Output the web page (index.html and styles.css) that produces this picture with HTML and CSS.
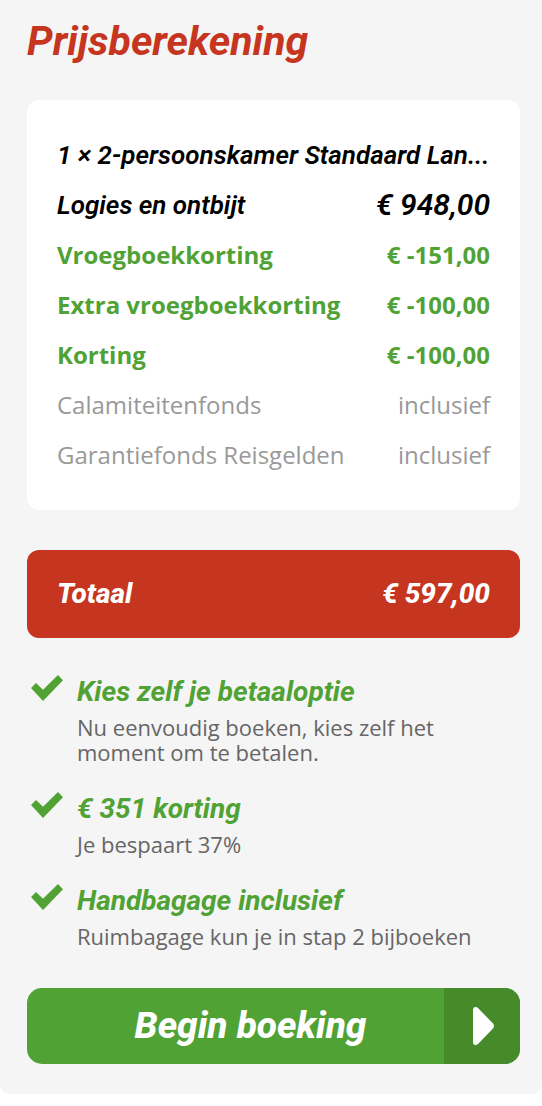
FILE: index.html
```
<!DOCTYPE html>
<html lang="nl">

<head>
    <meta charset="UTF-8">
    <meta name="viewport" content="width=device-width, initial-scale=1.0">
    <title>Prijsberekening</title>
    <link rel="stylesheet" href="styles.css">
</head>

<body>
    <main class="price-panel">
        <h1>Prijsberekening</h1>

        <div class="price-card">
            <table class="price-table">
                <tr class="room">
                    <th colspan="2" scope="row">1 × 2-persoonskamer Standaard Lan...</th>
                </tr>
                <tr class="room">
                    <th scope="row">Logies en ontbijt</th>
                    <td>€ 948,00</td>
                </tr>
                <tr class="discount">
                    <th scope="row">Vroegboekkorting</th>
                    <td>€ -151,00</td>
                </tr>
                <tr class="discount">
                    <th scope="row">Extra vroegboekkorting</th>
                    <td>€ -100,00</td>
                </tr>
                <tr class="discount">
                    <th scope="row">Korting</th>
                    <td>€ -100,00</td>
                </tr>
                <tr>
                    <th scope="row">Calamiteitenfonds</th>
                    <td>inclusief</td>
                </tr>
                <tr>
                    <th scope="row">Garantiefonds Reisgelden</th>
                    <td>inclusief</td>
                </tr>
            </table>
        </div>

        <div class="total">
            <span>Totaal</span>
            <span>€ 597,00</span>
        </div>

        <ul class="benefits">
            <li>
                <svg class="check" viewBox="0 0 32 26" aria-hidden="true"><path d="M0 13 5 8 12 14.800 27 0 32 5.200 12 26Z"/></svg>
                <div>
                    <h2>Kies zelf je betaaloptie</h2>
                    <p>Nu eenvoudig boeken, kies zelf het moment om te betalen.</p>
                </div>
            </li>
            <li>
                <svg class="check" viewBox="0 0 32 26" aria-hidden="true"><path d="M0 13 5 8 12 14.800 27 0 32 5.200 12 26Z"/></svg>
                <div>
                    <h2>€ 351 korting</h2>
                    <p>Je bespaart 37%</p>
                </div>
            </li>
            <li>
                <svg class="check" viewBox="0 0 32 26" aria-hidden="true"><path d="M0 13 5 8 12 14.800 27 0 32 5.200 12 26Z"/></svg>
                <div>
                    <h2>Handbagage inclusief</h2>
                    <p>Ruimbagage kun je in stap 2 bijboeken</p>
                </div>
            </li>
        </ul>

        <button type="button" class="book-button">
            <span class="book-label">Begin boeking</span>
            <span class="book-arrow">
                <svg viewBox="0 0 22 38" aria-hidden="true"><path d="M1 3Q1 0 3.500 0Q5 0 6 1L21 16.500Q23 19 21 21.500L6 37Q5 38 3.500 38Q1 38 1 35Z"/></svg>
            </span>
        </button>
    </main>
</body>

</html>
```

FILE: styles.css
```
* {
    margin: 0;
    padding: 0;
    box-sizing: border-box;
}

body {
    background: #fff;
    font-family: 'Open Sans', sans-serif;
}

.price-panel {
    background: #f5f5f5;
    padding: 16px 22px 30px 27px;
    border-radius: 0 0 10px 10px;
}

h1,
h2,
.room,
.total,
.book-button {
    font-family: 'Roboto', sans-serif;
    font-style: italic;
    font-weight: bold;
}

h1 {
    color: #c63520;
    font-size: 41px;
    line-height: 50px;
    margin-bottom: 34px;
}

.price-card {
    background: #fff;
    border-radius: 12px;
    padding: 30px;
}

.price-table {
    width: 100%;
    border-collapse: collapse;
    color: #999;
    font-size: 24px;
    line-height: 50px;
}

.price-table th {
    font-weight: inherit;
    text-align: left;
    white-space: nowrap;
}

.price-table td {
    text-align: right;
    white-space: nowrap;
}

.price-table .room {
    color: #000;
    font-size: 26px;
    font-weight: 600;
}

.price-table .room td {
    font-size: 30px;
}

.price-table .discount {
    color: #50a235;
    font-weight: bold;
}

.total {
    display: flex;
    justify-content: space-between;
    margin: 40px 0;
    padding: 19px 30px;
    border-radius: 12px;
    background: #c63520;
    color: #fff;
    font-size: 28px;
    font-weight: 800;
    line-height: 50px;
}

.benefits {
    list-style: none;
    display: grid;
    gap: 30px;
}

.benefits li {
    display: flex;
    gap: 14px;
    padding-left: 4px;
}

.check {
    flex: none;
    width: 32px;
    height: 26px;
    margin-top: -3px;
    fill: #50a235;
}

h2 {
    color: #50a235;
    font-size: 28px;
    line-height: 28px;
    margin-bottom: 9px;
}

.benefits p {
    color: #666;
    font-size: 22px;
    line-height: 25px;
}

.book-button {
    display: flex;
    width: 100%;
    margin-top: 39px;
    border: 0;
    border-radius: 15px;
    overflow: hidden;
    background: #50a235;
    color: #fff;
    font-size: 37px;
    font-weight: 800;
    line-height: 76px;
    cursor: pointer;
}

.book-label {
    flex: 1;
    padding-left: 30px;
}

.book-arrow {
    display: flex;
    align-items: center;
    justify-content: center;
    width: 76px;
    height: 76px;
    padding-left: 2px;
    background: #468a2a;
}

.book-arrow svg {
    width: 22px;
    height: 38px;
    fill: #fff;
}
```
